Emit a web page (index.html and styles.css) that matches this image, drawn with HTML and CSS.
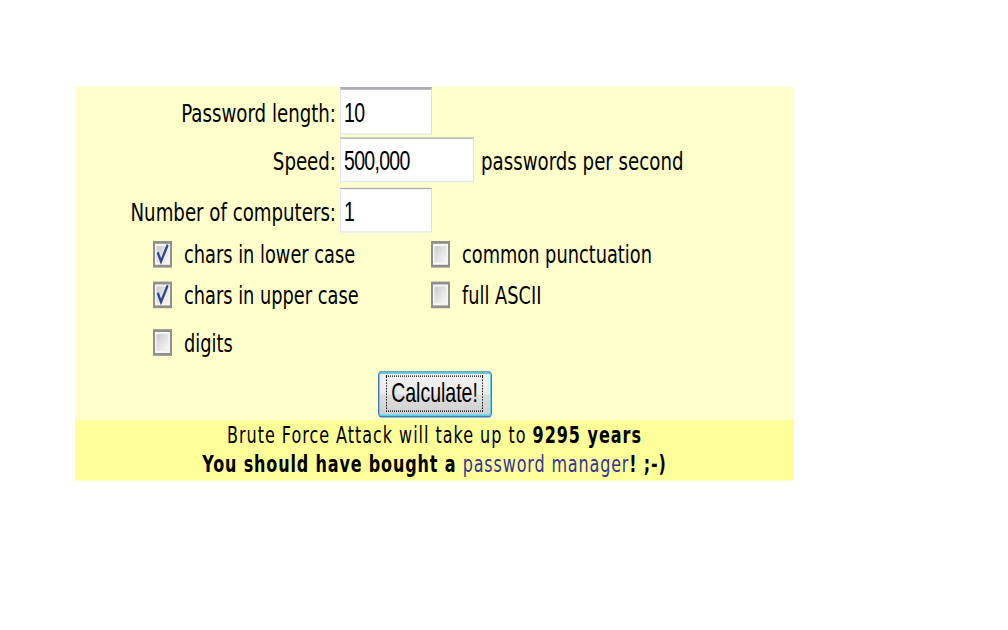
FILE: index.html
```html
<!DOCTYPE html>
<html lang="en">
<head>
<meta charset="utf-8">
<title>Brute Force Calculator</title>
<link rel="stylesheet" href="styles.css">
</head>
<body>
<div class="stage">
<div class="calc">
  <form class="form">
    <div class="fields">
      <div class="row">
        <label class="lbl" for="len">Password length:</label>
        <input class="field short" id="len" type="text" value="10">
      </div>
      <div class="row">
        <label class="lbl" for="speed">Speed:</label>
        <input class="field wide" id="speed" type="text" value="500,000">
        <span class="unit">passwords per second</span>
      </div>
      <div class="row">
        <label class="lbl" for="comp">Number of computers:</label>
        <input class="field short" id="comp" type="text" value="1">
      </div>
    </div>
    <div class="opts">
      <label class="opt"><span class="box"><svg class="tick" viewBox="0 0 15 15.3" width="15" height="15.3"><path d="M3.2 7 L6 12.6 L12.2 1.6" /></svg></span><span>chars in lower case</span></label>
      <label class="opt"><span class="box"></span><span>common punctuation</span></label>
      <label class="opt"><span class="box"><svg class="tick" viewBox="0 0 15 15.3" width="15" height="15.3"><path d="M3.2 7 L6 12.6 L12.2 1.6" /></svg></span><span>chars in upper case</span></label>
      <label class="opt"><span class="box"></span><span>full ASCII</span></label>
      <label class="opt last"><span class="box"></span><span>digits</span></label>
    </div>
    <div class="actions">
      <button class="btn" type="button"><span class="btn-inner">Calculate!</span></button>
    </div>
  </form>
  <div class="result">
    <div class="verdict">Brute Force Attack will take up to <b>9295 years</b></div>
    <div class="promo">You should have bought a <a href="#">password manager</a>! ;-)</div>
  </div>
</div>
</div>
</body>
</html>
```
FILE: styles.css
```css
html, body {
  margin: 0;
  padding: 0;
  background: #ffffff;
}

body {
  min-height: 630px;
  font-family: "DejaVu Sans", "Noto Sans", sans-serif;
  color: #000000;
}

.stage {
  box-sizing: border-box;
  height: 630px;
  padding: 87px 0 0 75px;
}

.calc {
  width: 719px;
  background: #ffffcc;
  transform: scaleY(1.4);
  transform-origin: 0 0;
}

.form {
  margin: 0;
  height: 237.9px;
  box-sizing: border-box;
  display: flex;
  flex-direction: column;
}

.fields {
  display: flex;
  flex-direction: column;
}

.row {
  display: flex;
  align-items: center;
  height: 33px;
}

.row:first-child {
  height: 34px;
}

.row:first-child .field {
  height: 34px;
  border-top-width: 2px;
}

.row:nth-child(2) {
  margin-top: 1px;
}

.row:last-child {
  margin-top: 3.4px;
}

.lbl {
  width: 261px;
  margin-right: 4px;
  padding-top: 2.8px;
  text-align: right;
  font-size: 18.2px;
  white-space: nowrap;
}

.field {
  box-sizing: border-box;
  height: 32px;
  margin: 0;
  padding: 2.5px 3px 0;
  border: 1px solid;
  border-color: #abadb3 #dbdfe6 #e3e9ef #e2e3ea;
  background: #ffffff;
  font-family: "Liberation Sans", sans-serif;
  font-size: 19.5px;
  letter-spacing: -0.7px;
  color: #000000;
  outline: none;
}

.short {
  width: 92px;
}

.wide {
  width: 134px;
}

.unit {
  margin-left: 7px;
  padding-top: 2.8px;
  font-size: 18.2px;
  white-space: nowrap;
}

.opts {
  display: grid;
  grid-template-columns: 278px auto;
  row-gap: 9.3px;
  padding-left: 78px;
  margin-top: 5.6px;
}

.opt {
  display: flex;
  align-items: center;
  gap: 12px;
  height: 19.3px;
  font-size: 17.8px;
  white-space: nowrap;
}

.opt.last {
  margin-top: 5.7px;
}

.box {
  flex: none;
  box-sizing: border-box;
  width: 19px;
  height: 19.3px;
  border: 2px solid #8f8f8f;
  background: linear-gradient(135deg, #c4c4c4 0%, #e6e6e6 55%, #fbfbfb 100%);
  box-shadow: inset 0 0 0 1.5px #f6f6f6;
  display: flex;
}

.tick path {
  fill: none;
  stroke: #33458f;
  stroke-width: 2.2;
  stroke-linecap: square;
  stroke-linejoin: miter;
}

.actions {
  margin-top: 10.4px;
  text-align: center;
}

.btn {
  box-sizing: border-box;
  width: 114px;
  height: 33px;
  padding: 0;
  border: 1px solid #3c7fb1;
  border-radius: 3px;
  box-shadow: inset 0 0 0 1px #4fd0f6;
  background: linear-gradient(#f2f2f2 0%, #ebebeb 50%, #dddddd 51%, #cfcfcf 100%);
  font-family: "Liberation Sans", sans-serif;
  font-size: 19.5px;
  color: #000000;
  cursor: pointer;
}

.btn-inner {
  display: inline-block;
  padding: 0 4px;
  line-height: 23.7px;
  border: 1px dotted #000000;
}

.result {
  box-sizing: border-box;
  height: 42.9px;
  padding-top: 1px;
  background: #ffff99;
  text-align: center;
  font-size: 16px;
  line-height: 20.7px;
  letter-spacing: 0.85px;
}

.verdict {
  letter-spacing: 0.98px;
}

.promo {
  font-weight: bold;
}

.promo a {
  font-weight: normal;
  color: #333399;
  text-decoration: none;
}
```
